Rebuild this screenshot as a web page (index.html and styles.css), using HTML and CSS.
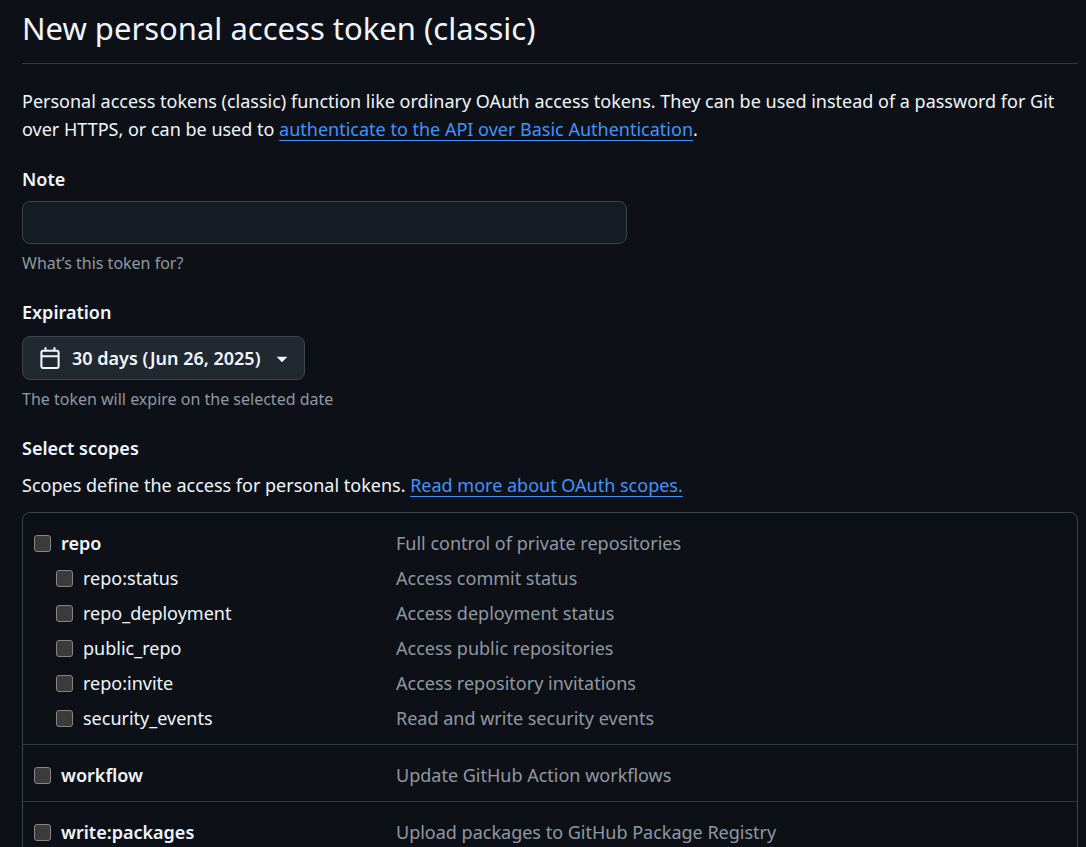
FILE: index.html
```html
<!DOCTYPE html>
<html lang="en">
<head>
<meta charset="utf-8">
<title>New personal access token (classic)</title>
<link rel="stylesheet" href="styles.css">
</head>
<body>
<main class="page">
  <h1 class="title">New personal access token (classic)</h1>
  <p class="intro">Personal access tokens (classic) function like ordinary OAuth access tokens. They can be used instead of a password for Git over HTTPS, or can be used to <a class="link" href="#">authenticate to the API over Basic Authentication</a>.</p>
  <form class="form">
    <div class="field">
      <label class="field-label" for="note">Note</label>
      <input class="text-input" id="note" type="text" aria-describedby="note-hint">
      <p class="hint" id="note-hint">What’s this token for?</p>
    </div>
    <div class="field">
      <span class="field-label" id="exp-label">Expiration</span>
      <button class="picker" id="exp" type="button" aria-labelledby="exp-label exp" aria-haspopup="true">
        <svg class="icon" viewBox="0 0 16 16" aria-hidden="true"><path d="M4.75 0a.75.75 0 0 1 .75.75V2h5V.75a.75.75 0 0 1 1.5 0V2h1.25c.966 0 1.75.784 1.75 1.75v10.5A1.75 1.75 0 0 1 13.25 16H2.75A1.75 1.75 0 0 1 1 14.25V3.75C1 2.784 1.784 2 2.75 2H4V.75A.75.75 0 0 1 4.75 0ZM2.5 7.5v6.75c0 .138.112.25.25.25h10.5a.25.25 0 0 0 .25-.25V7.5Zm10.75-4H2.75a.25.25 0 0 0-.25.25V6h11V3.75a.25.25 0 0 0-.25-.25Z"/></svg>
        <span>30 days (Jun 26, 2025)</span>
        <svg class="icon" viewBox="0 0 16 16" aria-hidden="true"><path d="m4.427 7.427 3.396 3.396a.25.25 0 0 0 .354 0l3.396-3.396A.25.25 0 0 0 11.396 7H4.604a.25.25 0 0 0-.177.427Z"/></svg>
      </button>
      <p class="hint">The token will expire on the selected date</p>
    </div>
    <section class="scopes">
      <h2 class="field-label">Select scopes</h2>
      <p class="scopes-intro">Scopes define the access for personal tokens. <a class="link" href="#">Read more about OAuth scopes.</a></p>
      <div class="scope-box">
        <ul class="scope-group">
          <li class="scope"><label class="scope-name main"><input class="check" type="checkbox">repo</label><span class="scope-desc">Full control of private repositories</span></li>
          <li class="scope"><label class="scope-name sub"><input class="check" type="checkbox">repo:status</label><span class="scope-desc">Access commit status</span></li>
          <li class="scope"><label class="scope-name sub"><input class="check" type="checkbox">repo_deployment</label><span class="scope-desc">Access deployment status</span></li>
          <li class="scope"><label class="scope-name sub"><input class="check" type="checkbox">public_repo</label><span class="scope-desc">Access public repositories</span></li>
          <li class="scope"><label class="scope-name sub"><input class="check" type="checkbox">repo:invite</label><span class="scope-desc">Access repository invitations</span></li>
          <li class="scope"><label class="scope-name sub"><input class="check" type="checkbox">security_events</label><span class="scope-desc">Read and write security events</span></li>
        </ul>
        <ul class="scope-group">
          <li class="scope"><label class="scope-name main"><input class="check" type="checkbox">workflow</label><span class="scope-desc">Update GitHub Action workflows</span></li>
        </ul>
        <ul class="scope-group">
          <li class="scope"><label class="scope-name main"><input class="check" type="checkbox">write:packages</label><span class="scope-desc">Upload packages to GitHub Package Registry</span></li>
        </ul>
      </div>
    </section>
  </form>
</main>
</body>
</html>
```
FILE: styles.css
```css
* { box-sizing: border-box; }
body {
  margin: 0;
  height: 100vh;
  overflow: hidden;
  background: #0d1117;
  color: #f0f6fc;
  font: 18px/28px "Segoe UI", "Noto Sans", sans-serif;
}
h1, h2, p, ul { margin: 0; padding: 0; }
.page { padding: 4px 8px 0 22px; }
.title {
  padding-bottom: 11px;
  border-bottom: 1px solid #2f353d;
  font-size: 31px;
  font-weight: 400;
  line-height: 48px;
}
.intro { margin-top: 23px; }
.link {
  color: #4493f8;
  text-decoration: underline;
  text-decoration-thickness: 1px;
  text-underline-offset: 4px;
}
.form { display: flex; flex-direction: column; gap: 23px; margin-top: 22px; }
.field { display: flex; flex-direction: column; align-items: flex-start; }
.field-label { font-size: 18px; font-weight: 600; line-height: 28px; }
.text-input {
  width: 100%;
  max-width: 605px;
  height: 43px;
  margin-top: 8px;
  padding: 0 16px;
  border: 1px solid #3d444d;
  border-radius: 8px;
  background: #151b23;
  color: inherit;
  font: inherit;
}
.hint { margin-top: 7px; color: #9198a1; font-size: 16px; line-height: 24px; }
.picker {
  display: flex;
  align-items: center;
  gap: 11px;
  height: 44px;
  margin-top: 10px;
  padding: 0 11px 0 16px;
  border: 1px solid #3d444d;
  border-radius: 8px;
  background: #212830;
  color: inherit;
  font: inherit;
  font-weight: 600;
}
.icon { width: 22px; height: 22px; fill: currentColor; }
.scopes-intro { margin-top: 9px; }
.scope-box {
  margin-top: 13px;
  border: 1px solid #3d444d;
  border-radius: 8px;
}
.scope-group { padding: 13px 11px 8px; list-style: none; }
.scope-group + .scope-group { border-top: 1px solid #2f353d; }
.scope {
  display: grid;
  grid-template-columns: 362px 1fr;
  line-height: 35px;
}
.scope-name { display: flex; align-items: center; gap: 10px; }
.main { font-weight: 600; }
.sub { padding-left: 22px; }
.check {
  appearance: none;
  width: 17px;
  height: 17px;
  margin: 0;
  border: 1px solid #858585;
  border-radius: 3px;
  background: #3b3b3b;
}
.scope-desc { color: #9198a1; }
```
